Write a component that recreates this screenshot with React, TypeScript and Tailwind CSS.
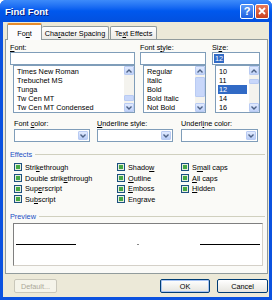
import React from "react"

const ff = "font-['Liberation_Sans',Arial,sans-serif]"

function Acc({ text, k }: { text: string; k: number }) {
  return (
    <>
      {text.slice(0, k)}
      <span className="underline underline-offset-[1px]">{text[k]}</span>
      {text.slice(k + 1)}
    </>
  )
}

function Chevron({ up = false }: { up?: boolean }) {
  return (
    <svg width="6" height="4" viewBox="0 0 6 4">
      <path
        d={up ? "M0.5 3.5 L3 1 L5.5 3.5" : "M0.5 0.5 L3 3 L5.5 0.5"}
        stroke="#4D6185"
        strokeWidth="1.4"
        fill="none"
      />
    </svg>
  )
}

function ArrowBtn({ up = false }: { up?: boolean }) {
  return (
    <div className="h-[9px] w-full rounded-[1px] border border-[#B9CBF3] bg-gradient-to-b from-[#E1EAFE] to-[#C0D2F8] flex items-center justify-center">
      <Chevron up={up} />
    </div>
  )
}

function ListBox({
  items,
  selected,
  thumbTop,
  thumbH
}: {
  items: string[]
  selected?: number
  thumbTop: number
  thumbH: number
}) {
  return (
    <div className="flex h-[48px] border border-[#7F9DB9] bg-white">
      <div className="flex-1 flex flex-col pt-[1px] pl-[2px] pr-[2px]">
        {items.map((t, i) => (
          <div
            key={t}
            className={
              "h-[9px] leading-[9px] whitespace-nowrap px-[1px] " +
              (i === selected ? "bg-[#316AC5] text-white" : "text-black")
            }
          >
            {t}
          </div>
        ))}
      </div>
      <div className="w-[10px] flex flex-col bg-[#F4F3EE]">
        <ArrowBtn up />
        <div className="flex-1 relative">
          <div
            className="absolute left-0 right-0 rounded-[1px] border border-[#B9CBF3] bg-[#C8D7FA]"
            style={{ top: thumbTop, height: thumbH }}
          />
        </div>
        <ArrowBtn />
      </div>
    </div>
  )
}

function TextBox({ children }: { children?: React.ReactNode }) {
  return (
    <div className="h-[13px] border border-[#7F9DB9] bg-white flex items-center px-[1px]">
      {children}
    </div>
  )
}

function Combo() {
  return (
    <div className="h-[13px] border border-[#7F9DB9] bg-white flex justify-end p-[1px]">
      <div className="w-[10px] h-full rounded-[1px] border border-[#B9CBF3] bg-gradient-to-b from-[#E1EAFE] to-[#B9CDF6] flex items-center justify-center">
        <Chevron />
      </div>
    </div>
  )
}

function Check({ children }: { children: React.ReactNode }) {
  return (
    <div className="h-[10.7px] flex items-center gap-[3px]">
      <div className="w-[8px] h-[8px] border border-[#1C5180] bg-[#E6EEDD] flex items-center justify-center">
        <div className="w-[4px] h-[4px] bg-[#45A845]" />
      </div>
      <span className="whitespace-nowrap">{children}</span>
    </div>
  )
}

function Btn({
  children,
  w,
  def = false,
  disabled = false
}: {
  children: React.ReactNode
  w: string
  def?: boolean
  disabled?: boolean
}) {
  return (
    <div
      className={
        w +
        " h-[14px] rounded-[2px] border flex items-center justify-center " +
        (disabled
          ? "border-[#C9C7BA] bg-[#F5F4EA] text-[#ACA899]"
          : "border-[#003C74] bg-gradient-to-b from-white to-[#E6E5DF] text-black") +
        (def ? " shadow-[inset_0_0_0_1px_#A8C4F4]" : "")
      }
    >
      {children}
    </div>
  )
}

export default function App() {
  return (
    <div className={ff + " w-[272px] h-[300px] bg-[#0B52E0] rounded-t-[6px] flex flex-col overflow-hidden select-none text-[7.3px] leading-[9px]"}>
      {/* title bar */}
      <div className="h-[22px] shrink-0 bg-gradient-to-b from-[#3D8BFA] via-[#0058EE] to-[#0350DE] flex items-center justify-between pl-[5px] pr-[3px]">
        <span className="text-white font-bold text-[9.5px] [text-shadow:1px_1px_0_#0A1F80]">Find Font</span>
        <div className="flex gap-[1px] items-center">
          <div className="w-[14px] h-[15px] rounded-[2px] border border-white bg-gradient-to-b from-[#5C9AF8] to-[#1E5FE0] flex items-center justify-center text-white font-bold text-[11px]">
            ?
          </div>
          <div className="w-[14px] h-[15px] rounded-[2px] border border-white bg-gradient-to-b from-[#E8795A] to-[#C8401E] flex items-center justify-center">
            <svg width="8" height="8" viewBox="0 0 8 8">
              <path d="M1 1 L7 7 M7 1 L1 7" stroke="white" strokeWidth="1.8" />
            </svg>
          </div>
        </div>
      </div>

      {/* client */}
      <div className="flex-1 ml-[3px] mr-[3px] mb-[3px] bg-[#ECE9D8] flex flex-col">
        {/* tabs */}
        <div className="flex items-end pl-[4px] pt-[1px] h-[17px] whitespace-nowrap">
          <div className="relative z-10 -mb-[1px] h-[17px] w-[35px] border border-b-0 border-[#919B9C] border-t-[#E68B2C] border-t-2 rounded-t-[2px] bg-[#FCFCFE] flex items-center justify-center pt-[1px]">
            <Acc text="Font" k={2} />
          </div>
          <div className="h-[13px] w-[67px] border border-b-0 border-l-0 border-[#919B9C] rounded-t-[2px] bg-gradient-to-b from-white to-[#ECEBE6] flex items-center justify-center">
            <Acc text="Character Spacing" k={3} />
          </div>
          <div className="h-[13px] w-[47px] ml-[1px] border border-b-0 border-[#919B9C] rounded-t-[2px] bg-gradient-to-b from-white to-[#ECEBE6] flex items-center justify-center">
            <Acc text="Text Effects" k={2} />
          </div>
        </div>

        {/* panel */}
        <div className="ml-[2px] mr-[1px] h-[235px] border border-[#919B9C] bg-[#FAFAF7] flex flex-col text-black">
          {/* row 1 */}
          <div className="flex pl-[4px] pt-[3px] gap-[5px]">
            <div className="w-[125px] flex flex-col">
              <div className="h-[8px] mb-[1px]"><Acc text="Font:" k={0} /></div>
              <TextBox />
              <div className="pl-[3px]">
                <ListBox
                  items={["Times New Roman", "Trebuchet MS", "Tunga", "Tw Cen MT", "Tw Cen MT Condensed"]}
                  thumbTop={20}
                  thumbH={6}
                />
              </div>
            </div>
            <div className="w-[66px] flex flex-col">
              <div className="h-[8px] mb-[1px]"><Acc text="Font style:" k={6} /></div>
              <TextBox />
              <div className="pl-[3px]">
                <ListBox
                  items={["Regular", "Italic", "Bold", "Bold Italic", "Not Bold"]}
                  thumbTop={2}
                  thumbH={20}
                />
              </div>
            </div>
            <div className="w-[48px] ml-[1px] flex flex-col">
              <div className="h-[8px] mb-[1px]"><Acc text="Size:" k={2} /></div>
              <TextBox>
                <span className="bg-[#316AC5] text-white px-[1px] leading-[9px]">12</span>
              </TextBox>
              <div className="pl-[3px]">
                <ListBox items={["10", "11", "12", "14", "16"]} selected={2} thumbTop={4} thumbH={5} />
              </div>
            </div>
          </div>

          {/* row 2 */}
          <div className="flex pl-[8px] pt-[6px] gap-[7px]">
            <div className="w-[76px] flex flex-col">
              <div className="h-[8px] mb-[2px]"><Acc text="Font color:" k={5} /></div>
              <Combo />
            </div>
            <div className="w-[76px] flex flex-col">
              <div className="h-[8px] mb-[2px]"><Acc text="Underline style:" k={0} /></div>
              <Combo />
            </div>
            <div className="w-[77px] ml-[1px] flex flex-col">
              <div className="h-[8px] mb-[2px]"><Acc text="Underline color:" k={6} /></div>
              <Combo />
            </div>
          </div>

          {/* effects */}
          <div className="flex items-center pl-[4px] pr-[2px] pt-[8px]">
            <span className="text-[#1A4FC4]">Effects</span>
            <div className="flex-1 ml-[3px] h-[1px] bg-[#D0D0BF]" />
          </div>
          <div className="flex pl-[8px] pt-[3px]">
            <div className="w-[103px] flex flex-col">
              <Check><Acc text="Strikethrough" k={4} /></Check>
              <Check><Acc text="Double strikethrough" k={12} /></Check>
              <Check><Acc text="Superscript" k={3} /></Check>
              <Check><Acc text="Subscript" k={2} /></Check>
            </div>
            <div className="w-[64px] flex flex-col">
              <Check><Acc text="Shadow" k={5} /></Check>
              <Check><Acc text="Outline" k={0} /></Check>
              <Check><Acc text="Emboss" k={0} /></Check>
              <Check><Acc text="Engrave" k={2} /></Check>
            </div>
            <div className="flex flex-col">
              <Check><Acc text="Small caps" k={1} /></Check>
              <Check><Acc text="All caps" k={0} /></Check>
              <Check><Acc text="Hidden" k={0} /></Check>
            </div>
          </div>

          {/* preview */}
          <div className="flex items-center pl-[4px] pr-[2px] pt-[7px]">
            <span className="text-[#1A4FC4]">Preview</span>
            <div className="flex-1 ml-[3px] h-[1px] bg-[#D0D0BF]" />
          </div>
          <div className="ml-[7px] mr-[4px] mt-[2px] h-[43px] border border-[#7F7F7F] border-r-[#D4D0C8] border-b-[#D4D0C8] bg-white flex items-center px-[2px]">
            <div className="w-[60px] h-[1px] bg-black" />
            <div className="flex-1 flex justify-center">
              <div className="w-[2px] h-[1px] bg-[#888]" />
            </div>
            <div className="w-[60px] h-[1px] bg-black" />
          </div>
        </div>

        {/* buttons */}
        <div className="flex items-center pl-[11px] pr-[1px] pt-[5px]">
          <Btn w="w-[43px]" disabled>Default...</Btn>
          <div className="flex-1" />
          <Btn w="w-[50px]" def>OK</Btn>
          <div className="w-[7px]" />
          <Btn w="w-[51px]">Cancel</Btn>
        </div>
      </div>
    </div>
  )
}
